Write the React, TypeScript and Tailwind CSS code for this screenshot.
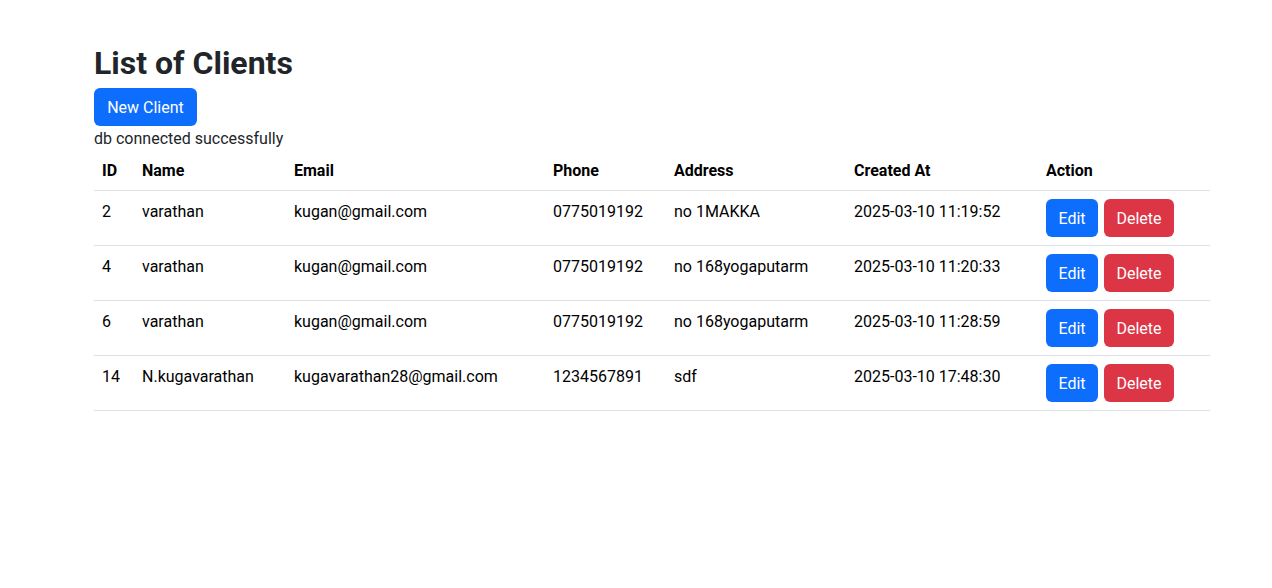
import React from "react";

const rows = [
  { id: "2", name: "varathan", email: "kugan@gmail.com", phone: "0775019192", address: "no 1MAKKA", created: "2025-03-10 11:19:52" },
  { id: "4", name: "varathan", email: "kugan@gmail.com", phone: "0775019192", address: "no 168yogaputarm", created: "2025-03-10 11:20:33" },
  { id: "6", name: "varathan", email: "kugan@gmail.com", phone: "0775019192", address: "no 168yogaputarm", created: "2025-03-10 11:28:59" },
  { id: "14", name: "N.kugavarathan", email: "kugavarathan28@gmail.com", phone: "1234567891", address: "sdf", created: "2025-03-10 17:48:30" },
];

export default function App() {
  return (
    <div className="min-h-[588px] bg-white font-['Segoe_UI','Roboto','Liberation_Sans',sans-serif] text-[16px] leading-[24px] text-[#212529]">
      <div className="ml-[94px] w-[1116px] pt-[44px]">
        <h2 className="mb-[6px] text-[32px] font-bold leading-[38px]">List of Clients</h2>
        <button className="flex h-[38px] w-[103px] items-center justify-center rounded-[6px] bg-[#0d6efd] pt-[2px] text-[16px] text-white">
          New Client
        </button>
        <div className="h-[24px] pt-[1px]">db connected successfully</div>
        <table className="w-[1116px] table-fixed border-collapse text-black">
          <colgroup>
            <col className="w-[40px]" />
            <col className="w-[152px]" />
            <col className="w-[259px]" />
            <col className="w-[121px]" />
            <col className="w-[180px]" />
            <col className="w-[192px]" />
            <col className="w-[172px]" />
          </colgroup>
          <thead>
            <tr className="border-b border-[#dee2e6]">
              {["ID", "Name", "Email", "Phone", "Address", "Created At", "Action"].map((h) => (
                <th key={h} className="px-[8px] pt-[9px] pb-[7px] text-left align-top font-bold">
                  {h}
                </th>
              ))}
            </tr>
          </thead>
          <tbody>
            {rows.map((r) => (
              <tr key={r.id} className="border-b border-[#dee2e6]">
                <td className="px-[8px] pt-[9px] pb-[7px] align-top">{r.id}</td>
                <td className="px-[8px] pt-[9px] pb-[7px] align-top">{r.name}</td>
                <td className="px-[8px] pt-[9px] pb-[7px] align-top">{r.email}</td>
                <td className="px-[8px] pt-[9px] pb-[7px] align-top">{r.phone}</td>
                <td className="px-[8px] pt-[9px] pb-[7px] align-top">{r.address}</td>
                <td className="px-[8px] pt-[9px] pb-[7px] align-top">{r.created}</td>
                <td className="p-[8px] align-top">
                  <div className="flex gap-[6px]">
                    <button className="flex h-[38px] w-[52px] items-center justify-center rounded-[6px] bg-[#0d6efd] pt-[2px] text-white">
                      Edit
                    </button>
                    <button className="flex h-[38px] w-[70px] items-center justify-center rounded-[6px] bg-[#dc3545] pt-[2px] text-white">
                      Delete
                    </button>
                  </div>
                </td>
              </tr>
            ))}
          </tbody>
        </table>
      </div>
    </div>
  );
}
